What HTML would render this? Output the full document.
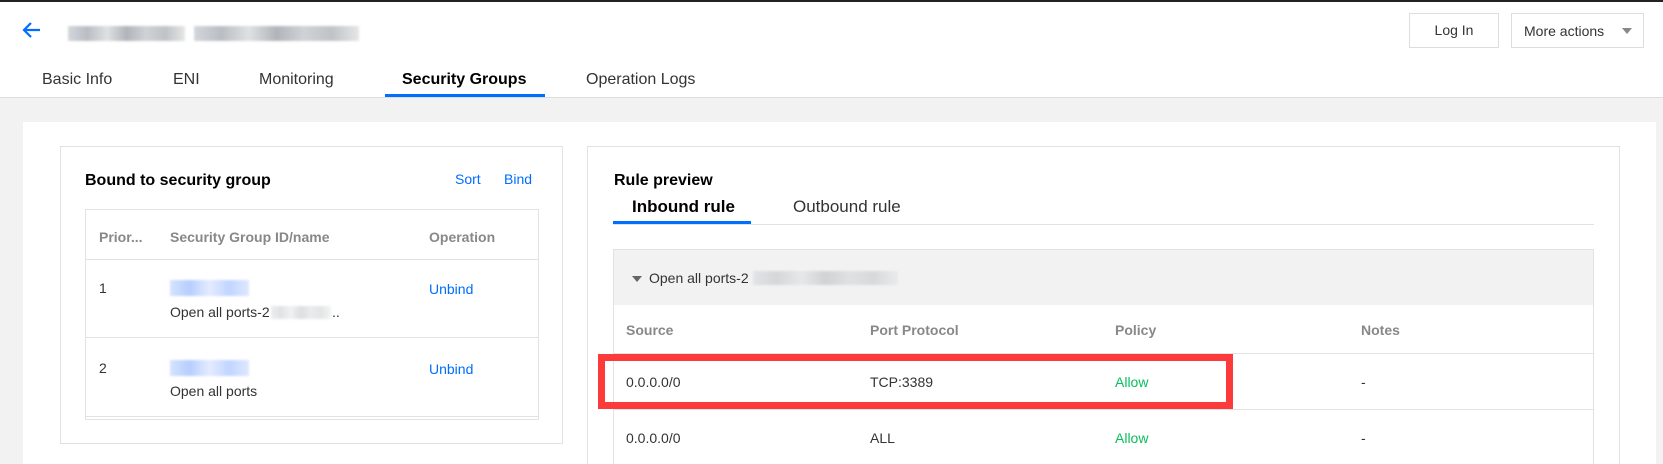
<!DOCTYPE html>
<html><head><style>
*{margin:0;padding:0;box-sizing:border-box}
html,body{width:1663px;height:464px;overflow:hidden}
body{background:#fff;font-family:"Liberation Sans",sans-serif;color:#333;font-size:14px;position:relative}
.a{position:absolute;white-space:nowrap}
.blur{position:absolute;background:linear-gradient(90deg,#c9cdd4,#a9aeb5,#d8dadc,#9ea3aa,#c5c8cc,#b0b4b9,#dfe1e3);opacity:.8;filter:blur(1px)}
.bb{position:absolute;background:linear-gradient(90deg,#d5e2ff,#b8ceff,#e3ebff,#c2d5ff,#dfe8ff);filter:blur(1px)}
.h{color:#888;font-weight:bold;font-size:14px}
.bl{color:#006eff}
.g{color:#0abf5b}
.ln{position:absolute;height:1px;background:#e2e2e2}
</style></head><body>
<div class="a" style="left:0;top:0;width:1663px;height:2px;background:#222"></div>
<svg class="a" style="left:22px;top:21px" width="20" height="18" viewBox="0 0 20 18"><path d="M18 9H3M9 2L2 9l7 7" stroke="#006eff" stroke-width="2.2" fill="none"/></svg>
<div class="blur" style="left:68px;top:26px;width:117px;height:15px"></div>
<div class="blur" style="left:194px;top:26px;width:165px;height:15px"></div>
<div class="a" style="left:1409px;top:13px;width:90px;height:35px;border:1px solid #ddd;text-align:center;line-height:33px;font-size:14px">Log In</div>
<div class="a" style="left:1511px;top:13px;width:133px;height:35px;border:1px solid #ddd;line-height:35px;padding-left:12px;font-size:14px">More actions</div>
<div class="a" style="left:1622px;top:28px;width:0;height:0;border-left:5px solid transparent;border-right:5px solid transparent;border-top:6px solid #888"></div>
<div class="a" style="left:42px;top:71px;font-size:16px">Basic Info</div>
<div class="a" style="left:173px;top:71px;font-size:16px">ENI</div>
<div class="a" style="left:259px;top:71px;font-size:16px">Monitoring</div>
<div class="a" style="left:402px;top:71px;font-size:16px;font-weight:bold;color:#000">Security Groups</div>
<div class="a" style="left:586px;top:71px;font-size:16px">Operation Logs</div>
<div class="a" style="left:385px;top:94px;width:160px;height:3px;background:#006eff"></div>
<div class="a" style="left:0;top:97px;width:1663px;height:367px;background:#f2f2f2;border-top:1px solid #ddd"></div>
<div class="a" style="left:23px;top:122px;width:1633px;height:342px;background:#fff"></div>
<div class="a" style="left:60px;top:146px;width:503px;height:298px;border:1px solid #e2e2e2"></div>
<div class="a" style="left:85px;top:172px;font-size:16px;font-weight:bold;color:#000">Bound to security group</div>
<div class="a bl" style="left:455px;top:171px">Sort</div>
<div class="a bl" style="left:504px;top:171px">Bind</div>
<div class="a" style="left:85px;top:209px;width:454px;height:211px;border:1px solid #e2e2e2"></div>
<div class="ln" style="left:85px;top:259px;width:454px"></div>
<div class="ln" style="left:85px;top:337px;width:454px"></div>
<div class="ln" style="left:85px;top:416px;width:454px"></div>
<div class="a h" style="left:99px;top:229px">Prior...</div>
<div class="a h" style="left:170px;top:229px">Security Group ID/name</div>
<div class="a h" style="left:429px;top:229px">Operation</div>
<div class="a" style="left:99px;top:280px">1</div>
<div class="bb" style="left:170px;top:280px;width:79px;height:16px"></div>
<div class="a" style="left:170px;top:304px">Open all ports-2</div>
<div class="blur" style="left:271px;top:306px;width:60px;height:13px;opacity:.35"></div>
<div class="a" style="left:332px;top:304px">..</div>
<div class="a bl" style="left:429px;top:281px">Unbind</div>
<div class="a" style="left:99px;top:360px">2</div>
<div class="bb" style="left:170px;top:360px;width:79px;height:16px"></div>
<div class="a" style="left:170px;top:383px">Open all ports</div>
<div class="a bl" style="left:429px;top:361px">Unbind</div>
<div class="a" style="left:587px;top:146px;width:1033px;height:318px;border:1px solid #e2e2e2;border-bottom:0"></div>
<div class="a" style="left:614px;top:172px;font-size:16px;font-weight:bold;color:#000">Rule preview</div>
<div class="a" style="left:632px;top:197px;font-size:17px;font-weight:bold;color:#000">Inbound rule</div>
<div class="a" style="left:793px;top:197px;font-size:17px">Outbound rule</div>
<div class="ln" style="left:613px;top:224px;width:981px"></div>
<div class="a" style="left:613px;top:221px;width:138px;height:3px;background:#006eff"></div>
<div class="a" style="left:613px;top:249px;width:981px;height:215px;border:1px solid #e2e2e2;border-bottom:0"></div>
<div class="a" style="left:614px;top:250px;width:979px;height:55px;background:#f2f2f2"></div>
<div class="a" style="left:632px;top:276px;width:0;height:0;border-left:5px solid transparent;border-right:5px solid transparent;border-top:6px solid #666"></div>
<div class="a" style="left:649px;top:270px">Open all ports-2</div>
<div class="blur" style="left:753px;top:271px;width:145px;height:14px;opacity:.4"></div>
<div class="ln" style="left:614px;top:353px;width:979px"></div>
<div class="ln" style="left:614px;top:409px;width:979px"></div>
<div class="a h" style="left:626px;top:322px">Source</div>
<div class="a h" style="left:870px;top:322px">Port Protocol</div>
<div class="a h" style="left:1115px;top:322px">Policy</div>
<div class="a h" style="left:1361px;top:322px">Notes</div>
<div class="a" style="left:626px;top:374px">0.0.0.0/0</div>
<div class="a" style="left:870px;top:374px">TCP:3389</div>
<div class="a g" style="left:1115px;top:374px">Allow</div>
<div class="a" style="left:1361px;top:374px">-</div>
<div class="a" style="left:626px;top:430px">0.0.0.0/0</div>
<div class="a" style="left:870px;top:430px">ALL</div>
<div class="a g" style="left:1115px;top:430px">Allow</div>
<div class="a" style="left:1361px;top:430px">-</div>
<div class="a" style="left:598px;top:354px;width:635px;height:55px;border:7px solid #fd3a3a"></div>
</body></html>
